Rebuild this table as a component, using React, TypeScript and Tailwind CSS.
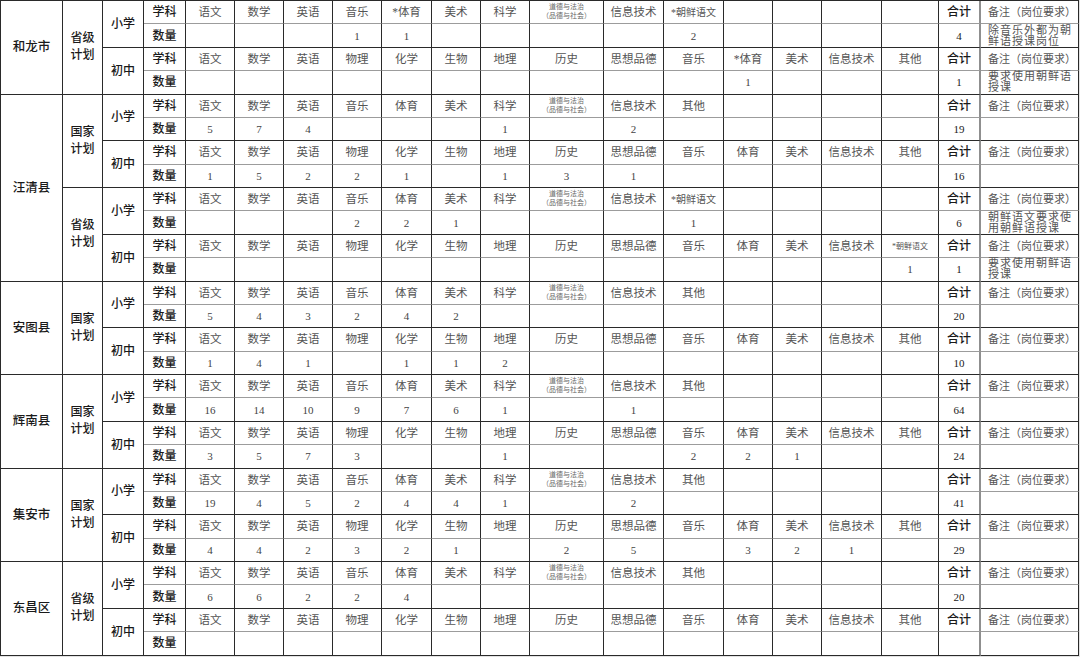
import React from "react";

type Level = {
  subjects: string[];
  nums: string[];
  total: string;
  note?: string;
};

type Plan = {
  name: [string, string];
  primary: Level;
  middle: Level;
};

type Block = {
  city: string;
  plans: Plan[];
};

const DD = "DD"; // 道德与法治（品德与社会）
const KS = "KS"; // small *朝鲜语文

const P_STD = ["语文", "数学", "英语", "音乐", "体育", "美术", "科学", DD, "信息技术", "其他", "", "", "", ""];
const P_KOR = ["语文", "数学", "英语", "音乐", "体育", "美术", "科学", DD, "信息技术", "*朝鲜语文", "", "", "", ""];
const P_HL = ["语文", "数学", "英语", "音乐", "*体育", "美术", "科学", DD, "信息技术", "*朝鲜语文", "", "", "", ""];
const M_STD = ["语文", "数学", "英语", "物理", "化学", "生物", "地理", "历史", "思想品德", "音乐", "体育", "美术", "信息技术", "其他"];
const M_HL = ["语文", "数学", "英语", "物理", "化学", "生物", "地理", "历史", "思想品德", "音乐", "*体育", "美术", "信息技术", "其他"];
const M_KOR = ["语文", "数学", "英语", "物理", "化学", "生物", "地理", "历史", "思想品德", "音乐", "体育", "美术", "信息技术", KS];

const n = (...v: (string | number)[]) => {
  const out = v.map((x) => (x === 0 ? "" : String(x)));
  while (out.length < 14) out.push("");
  return out;
};

const blocks: Block[] = [
  {
    city: "和龙市",
    plans: [
      {
        name: ["省级", "计划"],
        primary: { subjects: P_HL, nums: n(0, 0, 0, 1, 1, 0, 0, 0, 0, 2), total: "4", note: "除音乐外都为朝鲜语授课岗位" },
        middle: { subjects: M_HL, nums: n(0, 0, 0, 0, 0, 0, 0, 0, 0, 0, 1), total: "1", note: "要求使用朝鲜语授课" },
      },
    ],
  },
  {
    city: "汪清县",
    plans: [
      {
        name: ["国家", "计划"],
        primary: { subjects: P_STD, nums: n(5, 7, 4, 0, 0, 0, 1, 0, 2), total: "19" },
        middle: { subjects: M_STD, nums: n(1, 5, 2, 2, 1, 0, 1, 3, 1), total: "16" },
      },
      {
        name: ["省级", "计划"],
        primary: { subjects: P_KOR, nums: n(0, 0, 0, 2, 2, 1, 0, 0, 0, 1), total: "6", note: "朝鲜语文要求使用朝鲜语授课" },
        middle: { subjects: M_KOR, nums: n(0, 0, 0, 0, 0, 0, 0, 0, 0, 0, 0, 0, 0, 1), total: "1", note: "要求使用朝鲜语授课" },
      },
    ],
  },
  {
    city: "安图县",
    plans: [
      {
        name: ["国家", "计划"],
        primary: { subjects: P_STD, nums: n(5, 4, 3, 2, 4, 2), total: "20" },
        middle: { subjects: M_STD, nums: n(1, 4, 1, 0, 1, 1, 2), total: "10" },
      },
    ],
  },
  {
    city: "辉南县",
    plans: [
      {
        name: ["国家", "计划"],
        primary: { subjects: P_STD, nums: n(16, 14, 10, 9, 7, 6, 1, 0, 1), total: "64" },
        middle: { subjects: M_STD, nums: n(3, 5, 7, 3, 0, 0, 1, 0, 0, 2, 2, 1), total: "24" },
      },
    ],
  },
  {
    city: "集安市",
    plans: [
      {
        name: ["国家", "计划"],
        primary: { subjects: P_STD, nums: n(19, 4, 5, 2, 4, 4, 1, 0, 2), total: "41" },
        middle: { subjects: M_STD, nums: n(4, 4, 2, 3, 2, 1, 0, 2, 5, 0, 3, 2, 1), total: "29" },
      },
    ],
  },
  {
    city: "东昌区",
    plans: [
      {
        name: ["省级", "计划"],
        primary: { subjects: P_STD, nums: n(6, 6, 2, 2, 4), total: "20" },
        middle: { subjects: M_STD, nums: n(), total: "" },
      },
    ],
  },
];

const base = "border-r border-b border-[#2a2a2a] p-0 text-center align-middle text-[11px] leading-[12px]";
const subjBorder = "border-b-[#9c9c9c]";
const sumCol = "border-r-2 border-r-[#8f8f8f]";
const label = "text-[12px] font-medium text-[#1a1a1a]";

function Subject({ s }: { s: string }) {
  if (s === DD)
    return (
      <div className="flex flex-col items-center text-[7px] leading-[9px] text-[#666]">
        <span>道德与法治</span>
        <span>（品德与社会）</span>
      </div>
    );
  if (s === KS) return <span className="text-[8px] text-[#555]">*朝鲜语文</span>;
  if (s === "*朝鲜语文") return <span className="text-[10px] text-[#555]">*朝鲜语文</span>;
  return <span className="text-[11.5px] text-[#555]">{s}</span>;
}

function LevelRows({
  level,
  name,
  lead,
}: {
  level: Level;
  name: string;
  lead: React.ReactNode;
}) {
  return (
    <>
      <tr className="h-[23.39px]">
        {lead}
        <td rowSpan={2} className={`${base} ${label}`}>
          {name}
        </td>
        <td className={`${base} ${subjBorder} ${label}`}>学科</td>
        {level.subjects.map((s, i) => (
          <td key={i} className={`${base} ${subjBorder}`}>
            <Subject s={s} />
          </td>
        ))}
        <td className={`${base} ${subjBorder} ${sumCol} ${label}`}>合计</td>
        <td className={`${base} ${subjBorder} pl-[7px] text-left text-[10.5px] text-[#555]`}>
          备注（岗位要求）
        </td>
      </tr>
      <tr className="h-[23.39px]">
        <td className={`${base} ${label}`}>数量</td>
        {level.nums.map((v, i) => (
          <td key={i} className={`${base} text-[#444]`}>
            {v}
          </td>
        ))}
        <td className={`${base} ${sumCol} font-medium text-[#1a1a1a]`}>{level.total}</td>
        <td className={`${base} pl-[7px] pr-[2px] text-left`}>
          {level.note && (
            <div className="text-[11px] leading-[11px] tracking-[1px] text-[#555]">{level.note}</div>
          )}
        </td>
      </tr>
    </>
  );
}

export default function App() {
  return (
    <div className="w-[1080px] h-[657px] overflow-hidden bg-[#e2e2e2] font-['Liberation_Serif','Noto_Sans_CJK_SC',serif]">
      <table className="w-[1078px] table-fixed border-separate border-spacing-0 border-l border-t border-[#2a2a2a] bg-white">
        <colgroup>
          <col className="w-[62px]" />
          <col className="w-[40px]" />
          <col className="w-[41px]" />
          <col className="w-[42px]" />
          <col className="w-[49px]" />
          <col className="w-[49px]" />
          <col className="w-[49px]" />
          <col className="w-[49px]" />
          <col className="w-[50px]" />
          <col className="w-[49px]" />
          <col className="w-[49px]" />
          <col className="w-[74px]" />
          <col className="w-[60px]" />
          <col className="w-[60px]" />
          <col className="w-[49px]" />
          <col className="w-[49px]" />
          <col className="w-[60px]" />
          <col className="w-[57px]" />
          <col className="w-[42px]" />
          <col className="w-[98px]" />
        </colgroup>
        <tbody>
          {blocks.map((b) =>
            b.plans.map((p, pi) => (
              <React.Fragment key={b.city + pi}>
                <LevelRows
                  level={p.primary}
                  name="小学"
                  lead={
                    <>
                      {pi === 0 && (
                        <td rowSpan={b.plans.length * 4} className={`${base} text-[12.5px] font-medium text-[#1a1a1a]`}>
                          {b.city}
                        </td>
                      )}
                      <td rowSpan={4} className={`${base} text-[12px] leading-[17px] font-medium text-[#1a1a1a]`}>
                        <div>{p.name[0]}</div>
                        <div>{p.name[1]}</div>
                      </td>
                    </>
                  }
                />
                <LevelRows level={p.middle} name="初中" lead={null} />
              </React.Fragment>
            ))
          )}
        </tbody>
      </table>
    </div>
  );
}
